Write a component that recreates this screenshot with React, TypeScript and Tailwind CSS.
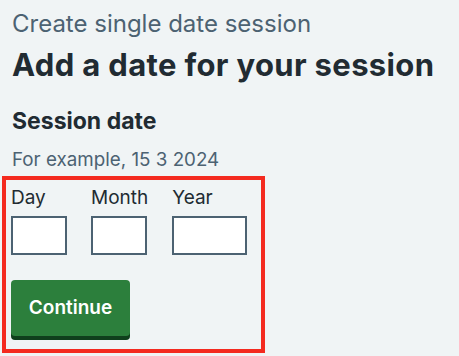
import React from "react";

export default function App() {
  return (
    <div className="min-h-screen w-full bg-[#f0f4f5] text-[#212b32]" style={{ fontFamily: "Inter, 'Liberation Sans', sans-serif" }}>
      <div className="pl-[12px] pt-[8px]">
        <p className="text-[24px] leading-[32px] text-[#4c6272]">Create single date session</p>
        <h1 className="text-[31px] leading-[38px] font-bold tracking-[0.35px] mt-[6px]">Add a date for your session</h1>
        <h2 className="text-[23px] leading-[30px] font-bold mt-[22px]">Session date</h2>
        <p className="text-[18.8px] leading-[26px] text-[#4c6272] mt-[11px]">For example, 15 3 2024</p>
      </div>
      <div className="ml-[2px] mt-[3px] w-[263px] border-4 border-[#f42a1f] pl-[5px] pt-[5px] pb-[13px]">
        <div className="flex gap-[24px]">
          <label className="flex flex-col">
            <span className="text-[19px] leading-[26px]">Day</span>
            <input className="mt-[5px] h-[39px] w-[56px] border-2 border-[#4c6272] bg-white outline-none" />
          </label>
          <label className="flex flex-col">
            <span className="text-[19px] leading-[26px]">Month</span>
            <input className="mt-[5px] h-[39px] w-[56px] border-2 border-[#4c6272] bg-white outline-none" />
          </label>
          <label className="flex flex-col">
            <span className="text-[19px] leading-[26px]">Year</span>
            <input className="mt-[5px] h-[39px] w-[75px] border-2 border-[#4c6272] bg-white outline-none" />
          </label>
        </div>
        <button className="mt-[25px] block h-[56px] w-[119px] rounded-[4px] bg-[#2c7f3c] text-[19px] font-semibold text-white shadow-[0_4px_0_#0f3f1c]">
          Continue
        </button>
      </div>
    </div>
  );
}
